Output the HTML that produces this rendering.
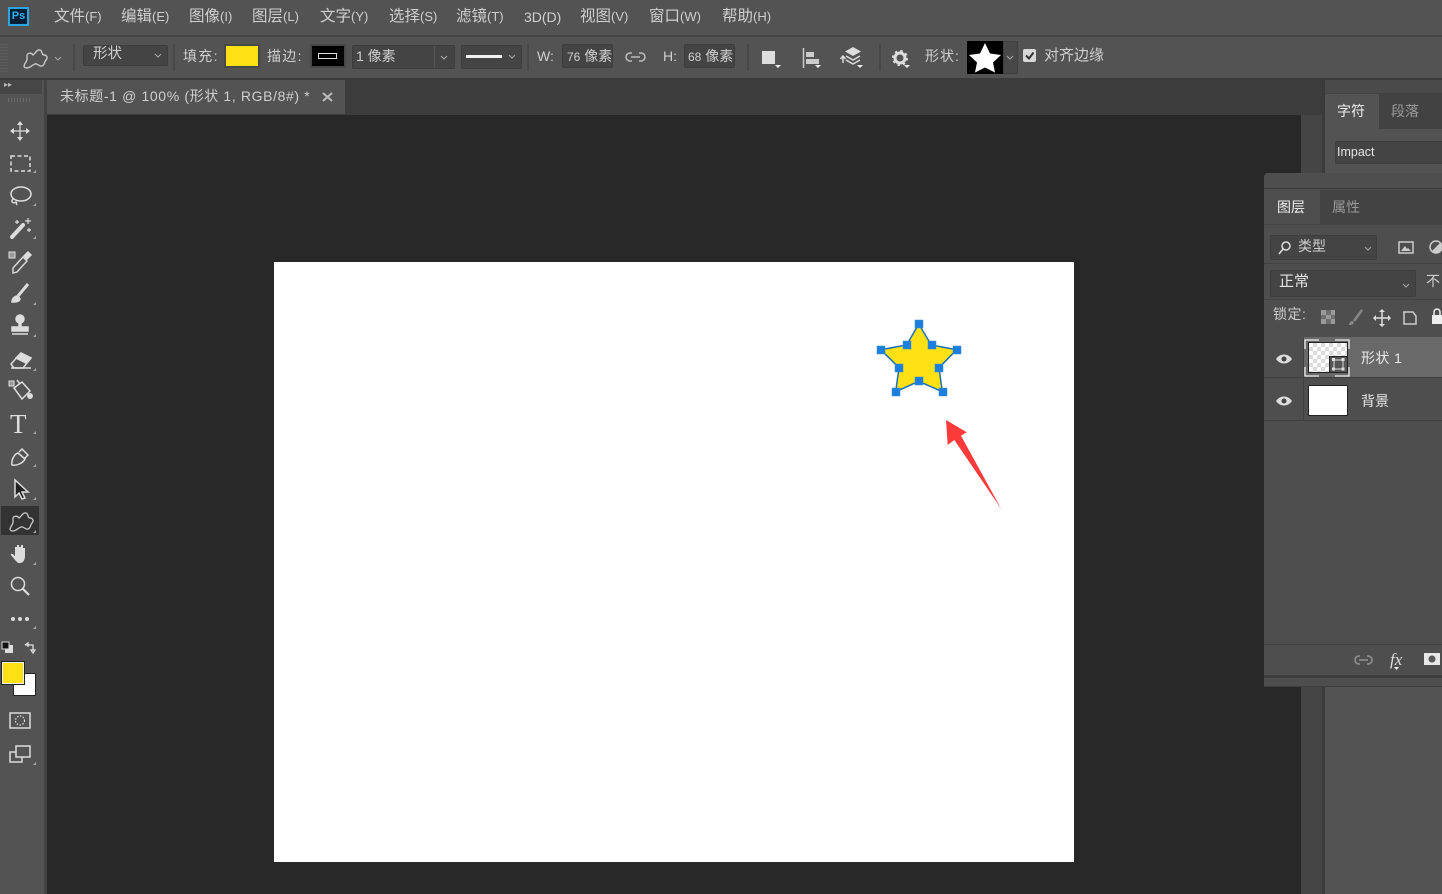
<!DOCTYPE html>
<html lang="zh"><head><meta charset="utf-8"><title>PS</title>
<style>
html,body{margin:0;padding:0;background:#282828}
body{width:1442px;height:894px;position:relative;overflow:hidden;font-family:"Liberation Sans","Noto Sans CJK SC",sans-serif;color:#cfcfcf;font-size:14px}
.a{position:absolute}
.t{position:absolute;white-space:nowrap;line-height:18px}
.f{position:absolute;background:#444;border:1px solid #3d3d3d;box-sizing:border-box;border-radius:2px}
.m{position:absolute;top:7px;white-space:nowrap;line-height:20px;font-size:15.500px}
.m span{font-size:13px}
svg{position:absolute;overflow:visible}
</style></head><body>
<!-- menu -->
<div class="a" style="left:0;top:0;width:1442px;height:35px;background:#535353"></div>
<div class="a" style="left:0;top:35px;width:1442px;height:2px;background:#434343"></div>
<div class="a" style="left:8px;top:7px;width:17px;height:15px;background:#001e36;border:2px solid #2aa5e0"></div>
<div class="t" style="left:8px;top:6px;width:21px;text-align:center;font-size:11px;font-weight:bold;color:#35b0f0;line-height:20px">Ps</div>
<div class="m" style="left:54px">文件<span>(F)</span></div>
<div class="m" style="left:121px">编辑<span>(E)</span></div>
<div class="m" style="left:189px">图像<span>(I)</span></div>
<div class="m" style="left:252px">图层<span>(L)</span></div>
<div class="m" style="left:320px">文字<span>(Y)</span></div>
<div class="m" style="left:389px">选择<span>(S)</span></div>
<div class="m" style="left:456px">滤镜<span>(T)</span></div>
<div class="m" style="left:524px"><span style="font-size:14px">3D(D)</span></div>
<div class="m" style="left:580px">视图<span>(V)</span></div>
<div class="m" style="left:649px">窗口<span>(W)</span></div>
<div class="m" style="left:722px">帮助<span>(H)</span></div>
<!-- options bar -->
<div class="a" style="left:0;top:37px;width:1442px;height:41px;background:#535353"></div>
<div class="a" style="left:0;top:78px;width:1442px;height:2px;background:#3c3c3c"></div>
<div class="a" style="left:0;top:42px;width:8px;height:30px;background:repeating-linear-gradient(0deg,#5e5e5e 0 1px,#535353 1px 3px)"></div>
<svg style="left:0;top:0" width="1442" height="80" fill="none">
<path transform="translate(14 -463)" d="M10 529C11 525 14 524 13 520 12 516 17 515 19 518 21 517 23 512 26 513 29 514 27 518 30 518 33 518 34 521 32 523 30 525 31 528 28 529 25 530 24 526 21 527 18 528 16 531 13 531 11 531 10 530 10 529z" stroke="#c8c8c8" stroke-width="1.400"/>
<path d="M55 57l3 3 3-3" stroke="#aaa"/>
<path d="M74 44v27M174 44v27M528 44v27M748 44v27M880 44v27" stroke="#3e3e3e"/>
<path d="M632 53h-2a4 4 0 000 8h2M639 53h2a4 4 0 010 8h-2M631 57h9" stroke="#bbb" stroke-width="1.500"/>
</svg>
<div class="f" style="left:83px;top:45px;width:85px;height:21px"></div>
<div class="t" style="left:93px;top:45px;font-size:14.500px">形状</div>
<div class="t" style="left:183px;top:47px;font-size:14px;letter-spacing:1.300px">填充:</div>
<div class="a" style="left:224px;top:44px;width:36px;height:24px;box-sizing:border-box;background:#fde114;border:2px solid #484848"></div>
<div class="t" style="left:267px;top:47px;font-size:14px;letter-spacing:1.300px">描边:</div>
<div class="a" style="left:310px;top:44px;width:36px;height:24px;box-sizing:border-box;background:#000;border:2px solid #484848"></div>
<div class="a" style="left:318px;top:53px;width:19px;height:6px;box-sizing:border-box;border:1px solid #ddd"></div>
<div class="f" style="left:352px;top:45px;width:103px;height:24px"></div>
<div class="a" style="left:434px;top:46px;width:1px;height:22px;background:#555"></div>
<div class="t" style="left:356px;top:47px;font-size:14px">1 像素</div>
<div class="f" style="left:461px;top:45px;width:61px;height:24px"></div>
<div class="a" style="left:466px;top:55px;width:36px;height:3px;background:#f0f0f0"></div>
<svg style="left:0;top:0" width="1442" height="80" fill="none"><path d="M155 54l3 3 3-3M441 56l3 3 3-3M509 55l3 3 3-3" stroke="#aaa"/></svg>
<div class="t" style="left:537px;top:47px;font-size:14px">W:</div>
<div class="f" style="left:562px;top:44px;width:51px;height:24px"></div>
<div class="t" style="left:567px;top:47px;font-size:14px;width:45px;overflow:hidden"><span style="font-size:12px">76</span> 像素</div>
<div class="t" style="left:663px;top:47px;font-size:14px">H:</div>
<div class="f" style="left:684px;top:44px;width:51px;height:24px"></div>
<div class="t" style="left:688px;top:47px;font-size:14px;width:46px;overflow:hidden"><span style="font-size:12px">68</span> 像素</div>
<svg style="left:0;top:0" width="1442" height="80">
<rect x="762" y="51" width="13" height="13" fill="#ddd"/>
<path d="M775 65h6l-3 3zM815 65h6l-3 3zM857 65h6l-3 3zM904 65h6l-3 3z" fill="#eee"/>
<path d="M803.500 48v20" stroke="#ccc" stroke-width="1.500"/>
<rect x="806" y="52" width="8" height="5" fill="#ccc"/><rect x="806" y="59" width="13" height="5" fill="#ccc"/>
<path d="M843 63v-6M840.500 59l2.500-3 2.500 3" stroke="#ddd" stroke-width="1.500" fill="none"/>
<path d="M853 47l8 4.500-8 4.500-8-4.500z" fill="#ddd"/><path d="M846 56l7 4 7-4M846 60l7 4 7-4" stroke="#ddd" stroke-width="1.500" fill="none"/>
<circle cx="900" cy="58" r="5" fill="none" stroke="#ddd" stroke-width="3"/><circle cx="900" cy="58" r="7" fill="none" stroke="#ddd" stroke-width="2" stroke-dasharray="2.500 3"/>
</svg>
<div class="t" style="left:925px;top:47px;font-size:14px;letter-spacing:1px">形状:</div>
<div class="a" style="left:967px;top:41px;width:36px;height:33px;background:#000"></div>
<svg style="left:967px;top:41px" width="36" height="33"><path d="M18 2l5 10.500 11 1.500-8 7.500 2 10-10-5-10 5 2-10-8-7.500 11-1.500z" fill="#fff"/></svg>
<div class="a" style="left:1003px;top:41px;width:15px;height:33px;background:#484848;border:1px solid #3f3f3f;box-sizing:border-box"></div>
<svg style="left:0;top:0" width="1442" height="80"><path d="M1007 56l3 3 3-3" stroke="#aaa" fill="none"/></svg>
<div class="a" style="left:1023px;top:49px;width:13px;height:13px;background:#d8d8d8;border-radius:2px"></div>
<svg style="left:1023px;top:49px" width="13" height="13"><path d="M3 6.500l3 3 4.500-6" stroke="#333" stroke-width="2" fill="none"/></svg>
<div class="t" style="left:1044px;top:47px;font-size:15px">对齐边缘</div>
<!-- left toolbar -->
<div class="a" style="left:0;top:80px;width:44px;height:814px;background:#535353"></div>
<div class="a" style="left:44px;top:80px;width:3px;height:814px;background:#434343"></div>
<div class="a" style="left:0;top:80px;width:42px;height:14px;background:#464646"></div>
<div class="a" style="left:8px;top:98px;width:24px;height:4px;background:repeating-linear-gradient(90deg,#6a6a6a 0 1px,#535353 1px 3px)"></div>
<div class="t" style="left:4px;top:79px;font-size:8px;color:#bbb;line-height:12px">▸▸</div>
<div class="a" style="left:1px;top:506px;width:38px;height:29px;background:#333;border-radius:1px"></div>
<div class="t" style="left:10px;top:410px;font-size:27px;line-height:28px;font-family:'Liberation Serif',serif;color:#ddd">T</div>
<svg style="left:0;top:0" width="46" height="780" fill="none" stroke="#ddd" stroke-width="1.500">
<!-- move -->
<path d="M20 124v14M13 131h14" stroke-width="1.200"/><path d="M20 121l-3 4h6zM20 141l-3-4h6zM10 131l4-3v6zM30 131l-4-3v6z" fill="#ddd" stroke="none"/>
<!-- marquee -->
<rect x="11" y="156" width="19" height="15" stroke-dasharray="4 2.500"/>
<!-- lasso -->
<ellipse cx="21" cy="194" rx="10" ry="7"/><path d="M13 199c-3 3 1 5 3 3 1 1 0 2 1 3"/>
<!-- wand -->
<path d="M12 237l11-12" stroke-width="4" stroke-linecap="round"/><path d="M28 218v6M25 221h6M17 220v4M15 222h4M29 228v4M27 230h4" stroke-width="1.200"/>
<!-- dropper -->
<path d="M13 268l10-11 4 4-10 11-4 1z" stroke-width="1.400"/><path d="M24 256l4-4 3 3-4 4z" fill="#ddd"/><rect x="9" y="252" width="6" height="6" fill="#999" stroke-width="1"/>
<!-- brush -->
<path d="M18 296l10-12" stroke-width="3"/><path d="M12 302c0-4 3-6 6-6l2 3c-1 3-4 3-8 3z" fill="#ddd"/>
<!-- stamp -->
<circle cx="20" cy="319" r="4" fill="#ddd"/><path d="M19 322h2v5h-2zM12 327h16v4H12z" fill="#ddd"/><path d="M12 334h16"/>
<!-- eraser -->
<path d="M11 364l10-11 10 5-8 10H14z"/><path d="M21 353l10 5-5 5-10-5z" fill="#ddd"/><path d="M11 368h20"/>
<!-- bucket -->
<path d="M14 388l8-6 8 9-8 8z"/><path d="M20 384l-3-4"/><circle cx="30" cy="396" r="2.200" fill="#ddd"/><rect x="9" y="381" width="5" height="5" fill="#999" stroke-width="1"/>
<!-- pen -->
<path d="M12 465c-1-4 2-11 6-12l7 6c-2 4-8 7-13 6zM19 452l3-3 6 6-3 3"/>
<!-- arrow -->
<path d="M15 480v17l4-4 3 6 3-1-3-6h6z" fill="#222" stroke="#ddd"/>
<!-- shape -->
<path d="M10 529C11 525 14 524 13 520 12 516 17 515 19 518 21 517 23 512 26 513 29 514 27 518 30 518 33 518 34 521 32 523 30 525 31 528 28 529 25 530 24 526 21 527 18 528 16 531 13 531 11 531 10 530 10 529z" stroke="#c8c8c8" stroke-width="1.300"/>
<!-- hand -->
<path d="M15 560c-2-3-5-5-4-6s3 1 4 2v-9h2v-2h2v2h2v-2h2v3h2v8c0 4-2 7-5 7h-2z" fill="#ddd" stroke="none"/>
<!-- zoom -->
<circle cx="18" cy="584" r="6.500"/><path d="M23 589l6 6" stroke-width="2.200"/>
<!-- more -->
<circle cx="13" cy="619" r="2" fill="#ddd" stroke="none"/><circle cx="20" cy="619" r="2" fill="#ddd" stroke="none"/><circle cx="27" cy="619" r="2" fill="#ddd" stroke="none"/>
<!-- corner markers -->
<path d="M36 170v3h-3zM36 203v3h-3zM36 236v3h-3zM36 302v3h-3zM36 334v3h-3zM36 368v3h-3zM36 431v3h-3zM36 464v3h-3zM36 497v3h-3zM36 530v3h-3zM36 562v3h-3zM36 626v3h-3zM36 762v3h-3z" fill="#aaa" stroke="none"/>
<!-- swatch small -->
<rect x="5" y="645" width="8" height="8" fill="#ddd" stroke="none"/><rect x="2" y="642" width="7" height="7" fill="#111" stroke="#ddd" stroke-width="1"/>
<path d="M25 645h8v5M33 653l-2-3h4zM25 645l3-2v4" stroke-width="1.300"/>
<!-- mask -->
<rect x="10" y="713" width="20" height="15"/><circle cx="20" cy="720.500" r="4.500" stroke-dasharray="1.500 1.500" stroke-width="1.200"/>
<!-- screen -->
<rect x="16" y="746" width="14" height="11"/><path d="M16 752H10v10h12v-5"/>
</svg>
<div class="a" style="left:13px;top:673px;width:23px;height:23px;box-sizing:border-box;background:#fff;border:1px solid #222"></div>
<div class="a" style="left:2px;top:662px;width:22px;height:22px;box-sizing:border-box;background:#fde114;border:1px solid #f0f0f0;outline:1px solid #222"></div>
<!-- tabs -->
<div class="a" style="left:47px;top:80px;width:1275px;height:35px;background:#3c3c3c"></div>
<div class="a" style="left:47px;top:80px;width:298px;height:34px;background:#535353"></div>
<div class="t" style="left:60px;top:87px;font-size:14px;letter-spacing:.63px">未标题-1 @ 100% (形状 1, RGB/8#) *</div>
<svg style="left:323px;top:93px" width="9" height="8"><path d="M0 0l9 8M9 0L0 8" stroke="#bbb" stroke-width="2"/></svg>
<!-- canvas -->
<div class="a" style="left:47px;top:115px;width:1255px;height:779px;background:#282828"></div>
<div class="a" style="left:274px;top:262px;width:800px;height:600px;background:#fff"></div>
<svg style="left:0;top:0" width="1442" height="894">
<path d="M918.700 324L931.300 345 956.700 349.700 939 367.700 942.300 391.700 918.700 381.300 895.700 391.700 899 367.700 880.700 349.700 906.700 345z" fill="#fde114" stroke="#1a6fb5" stroke-width="1.500"/>
<g fill="#1b7fe0" stroke="#3b8fc8" stroke-width=".5">
<rect x="915" y="320" width="8" height="8"/><rect x="928" y="341" width="8" height="8"/><rect x="953" y="346" width="8" height="8"/><rect x="935" y="364" width="8" height="8"/><rect x="939" y="388" width="8" height="8"/><rect x="915" y="377" width="8" height="8"/><rect x="892" y="388" width="8" height="8"/><rect x="895" y="364" width="8" height="8"/><rect x="877" y="346" width="8" height="8"/><rect x="903" y="341" width="8" height="8"/>
</g>
<path d="M946 420L966.700 432.300 961 435.700 1001.300 509 954.300 440 947.700 445z" fill="#fb3a3a"/>
</svg>
<!-- right dock -->
<div class="a" style="left:1301px;top:115px;width:21px;height:779px;background:#454545"></div>
<div class="a" style="left:1322px;top:80px;width:3px;height:814px;background:#3a3a3a"></div>
<div class="a" style="left:1325px;top:80px;width:117px;height:814px;background:#535353"></div>
<div class="a" style="left:1325px;top:80px;width:117px;height:13px;background:#4a4a4a"></div>
<div class="a" style="left:1325px;top:93px;width:117px;height:36px;background:#424242"></div>
<div class="a" style="left:1325px;top:94px;width:54px;height:35px;background:#535353"></div>
<div class="t" style="left:1337px;top:102px;font-size:14px;color:#eee">字符</div>
<div class="t" style="left:1391px;top:102px;font-size:14px;color:#999">段落</div>
<div class="f" style="left:1335px;top:141px;width:110px;height:23px"></div>
<div class="t" style="left:1337px;top:143px;font-size:12.500px;color:#e4e4e4">Impact</div>
<!-- layers panel -->
<div class="a" style="left:1264px;top:173px;width:178px;height:513px;background:#4e4e4e;border-radius:4px 0 0 0"></div>
<div class="a" style="left:1264px;top:188px;width:178px;height:1px;background:#3c3c3c"></div>
<div class="a" style="left:1320px;top:190px;width:122px;height:34px;background:#434343"></div>
<div class="t" style="left:1277px;top:198px;font-size:14px;color:#eee">图层</div>
<div class="t" style="left:1332px;top:198px;font-size:14px;color:#999">属性</div>
<div class="a" style="left:1264px;top:224px;width:178px;height:1px;background:#454545"></div>
<div class="f" style="left:1270px;top:235px;width:107px;height:25px"></div>
<svg style="left:1278px;top:240px" width="16" height="16" fill="none" stroke="#ddd" stroke-width="1.500"><circle cx="8" cy="6" r="4"/><path d="M5 9l-4 5"/></svg>
<div class="t" style="left:1298px;top:237px;font-size:14px">类型</div>
<div class="f" style="left:1270px;top:270px;width:146px;height:27px"></div>
<svg style="left:0;top:0" width="1442" height="894" fill="none"><path d="M1365 247l3 3 3-3M1403 284l3 3 3-3" stroke="#aaa"/>
<rect x="1399" y="242" width="14" height="11" stroke="#ccc" stroke-width="1.500"/><path d="M1401 251l4-5 2 3 1-1 3 3z" fill="#ccc"/>
<circle cx="1436" cy="247" r="6" stroke="#ccc" stroke-width="1.500"/><path d="M1436 241a6 6 0 010 12z" fill="#ccc" transform="rotate(45 1436 247)"/>
<rect x="1321" y="310" width="14" height="14" fill="#6e6e6e"/><path d="M1321 310h5v5h-5zM1331 310h4v5h-4zM1326 315h5v4h-5zM1321 319h5v5h-5zM1331 319h4v5h-4z" fill="#999"/>
<path d="M1349 325c0-3 2-4 4-4l1 2c-1 2-3 2-5 2z" fill="#888"/><path d="M1354 321l8-11" stroke="#888" stroke-width="2.500"/>
<path d="M1382 312v12M1376 318h12" stroke="#ddd" stroke-width="1.500"/><path d="M1382 309l-3 3h6zM1382 327l-3-3h6zM1373 318l3-3v6zM1391 318l-3-3v6z" fill="#ddd"/>
<path d="M1403 312h10l3 4v8h-12v-12" stroke="#ccc" stroke-width="1.500"/>
<rect x="1432" y="315" width="11" height="9" fill="#eee"/><path d="M1434 315v-3a3 3 0 016 0v3" stroke="#eee" stroke-width="1.500"/></svg>
<div class="a" style="left:1264px;top:263px;width:178px;height:1px;background:#434343"></div>
<div class="t" style="left:1279px;top:273px;font-size:15px;color:#e4e4e4">正常</div>
<div class="t" style="left:1426px;top:272px;font-size:14px">不</div>
<div class="a" style="left:1264px;top:299px;width:178px;height:1px;background:#434343"></div>
<div class="t" style="left:1273px;top:305px;font-size:14px;color:#ccc;letter-spacing:.5px">锁定:</div>
<div class="a" style="left:1303px;top:337px;width:139px;height:40px;background:#696969"></div>
<div class="a" style="left:1264px;top:377px;width:178px;height:1px;background:#3e3e3e"></div>
<div class="a" style="left:1303px;top:378px;width:139px;height:42px;background:#4e4e4e"></div>
<div class="a" style="left:1264px;top:420px;width:178px;height:1px;background:#3e3e3e"></div>
<div class="a" style="left:1303px;top:337px;width:1px;height:84px;background:#404040"></div>
<svg style="left:1276px;top:352px" width="16" height="60"><path d="M0 7c4-6 12-6 16 0-4 6-12 6-16 0z" fill="#ddd"/><circle cx="8" cy="7" r="2.500" fill="#444"/><path d="M0 49c4-6 12-6 16 0-4 6-12 6-16 0z" fill="#ddd"/><circle cx="8" cy="49" r="2.500" fill="#444"/></svg>
<div class="a" style="left:1308px;top:342px;width:40px;height:31px;box-sizing:border-box;border:1px solid #222;background-color:#fff;background-image:repeating-conic-gradient(#dcdcdc 0 25%,#fff 0 50%);background-size:8px 8px"></div>
<svg style="left:1304px;top:339px" width="48" height="38" fill="none" stroke="#f0f0f0" stroke-width="1.300"><path d="M1 10V1h14M31 1h14v9M1 28v9h14M31 37h14v-9"/></svg>
<div class="a" style="left:1329px;top:356px;width:19px;height:17px;background:#555;border:1px solid #222;box-sizing:border-box"></div>
<svg style="left:1329px;top:356px" width="19" height="17" fill="none" stroke="#ddd"><rect x="5" y="4" width="9" height="9"/><rect x="3.500" y="2.500" width="2" height="2" fill="#ddd"/><rect x="13" y="2.500" width="2" height="2" fill="#ddd"/><rect x="3.500" y="12" width="2" height="2" fill="#ddd"/><rect x="13" y="12" width="2" height="2" fill="#ddd"/></svg>
<div class="t" style="left:1361px;top:349px;font-size:14px;color:#e8e8e8;letter-spacing:.4px">形状 1</div>
<div class="a" style="left:1308px;top:385px;width:40px;height:31px;box-sizing:border-box;background:#fff;border:1px solid #222"></div>
<div class="t" style="left:1361px;top:392px;font-size:14px;color:#e8e8e8">背景</div>
<!-- footer -->
<div class="a" style="left:1264px;top:644px;width:178px;height:1px;background:#404040"></div>
<div class="a" style="left:1264px;top:675px;width:178px;height:3px;background:#3c3c3c"></div>
<div class="a" style="left:1264px;top:686px;width:178px;height:1px;background:#3e3e3e"></div>
<svg style="left:1350px;top:650px" width="92" height="24" fill="none"><path d="M10 6H9a4 4 0 000 8h1M17 6h1a4 4 0 010 8h-1M9 10h9" stroke="#8a8a8a" stroke-width="1.800"/><path d="M44 17h5l-2.500 3z" fill="#eee"/><rect x="74" y="3" width="16" height="12" fill="#e6e6e6"/><circle cx="82" cy="9" r="3.500" fill="#555"/></svg>
<div class="t" style="left:1390px;top:651px;font-size:17px;font-style:italic;font-family:'Liberation Serif',serif;color:#ddd">fx</div>
</body></html>
